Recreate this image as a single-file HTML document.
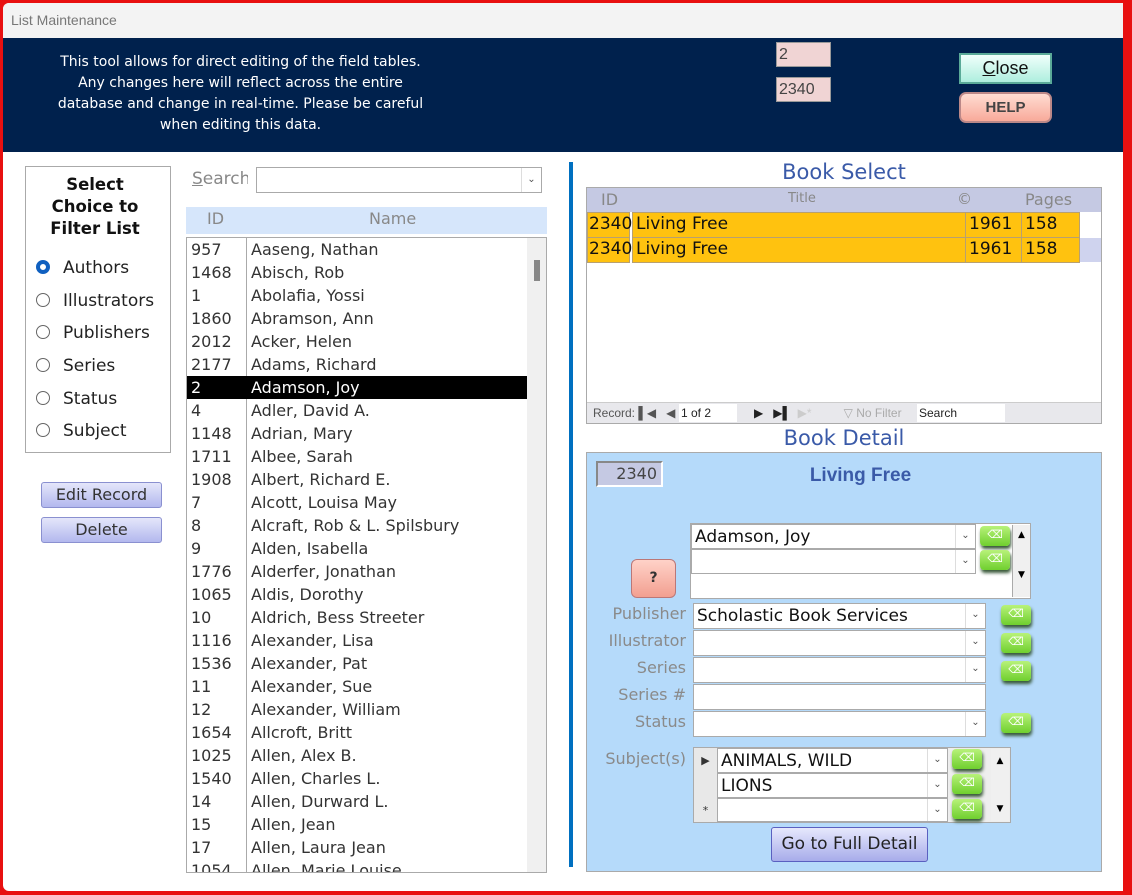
<!DOCTYPE html>
<html><head><meta charset="utf-8"><style>
*{margin:0;padding:0;box-sizing:border-box}
body{width:1132px;height:895px;background:#e81010;position:relative;overflow:hidden;font-family:"DejaVu Sans","Liberation Sans",sans-serif}
.a{position:absolute}
#win{left:3px;top:3px;width:1120px;height:888px;background:#fff;border-radius:6px 0 0 6px;overflow:hidden}
.t{font-size:15px;color:#888}
.row{position:absolute;left:0;height:23px;width:340px;font-size:16px;color:#333;line-height:23px}
.row span{position:absolute}
.rad{width:14px;height:14px;border:1px solid #666;border-radius:50%;background:#fff}
.rl{font-size:17px;color:#222}
.btn{background:linear-gradient(#e4e6fa,#b3b8ee);border:1px solid #8a90d0;border-radius:3px;text-align:center;color:#333;font-size:16px}
.lbl{font-size:16px;color:#8a8a8a;text-align:right;width:100px}
.fld{background:#fff;border:1px solid #aaa;font-size:17px;color:#111;padding-left:3px;line-height:24px}
.dd{position:absolute;right:0;top:0;width:20px;height:100%;border-left:1px solid #ddd;font-size:10px;color:#555;text-align:center;line-height:22px}
.gb{width:30px;height:20px;background:linear-gradient(#b8f27a,#6fcf2e);border-radius:4px;box-shadow:1px 3px 3px #3a5a3a;color:#fff;font-size:11px;text-align:center;line-height:18px}
.cell{position:absolute;background:#ffc20f;border:1px solid #b8a070;font-size:17px;color:#111;line-height:23px;padding-left:3px}
</style></head><body>
<div id="win" class="a">
<div class="a" style="left:0;top:0;width:1120px;height:35px;background:#f3f3f3"></div>
<div class="a t" style="left:8px;top:9px;font-family:'Liberation Sans';font-size:14px;color:#777">List Maintenance</div>
<div class="a" style="left:0;top:35px;width:1120px;height:114px;background:#00214d"></div>
<div class="a" style="left:10px;top:49px;width:455px;color:#fff;font-size:14px;line-height:21px;text-align:center;font-family:'DejaVu Sans'">This tool allows for direct editing of the field tables.<br>Any changes here will reflect across the entire<br>database and change in real-time. Please be careful<br>when editing this data.</div>
<div class="a" style="left:773px;top:39px;width:55px;height:25px;background:#f0d4d4;border:1px solid #999;font-size:16px;color:#444;padding-left:2px;line-height:24px;font-family:'Liberation Sans'">2</div>
<div class="a" style="left:773px;top:74px;width:55px;height:25px;background:#f0d4d4;border:1px solid #999;font-size:16px;color:#444;padding-left:2px;line-height:24px;font-family:'Liberation Sans'">2340</div>
<div class="a" style="left:956px;top:50px;width:93px;height:31px;background:linear-gradient(#f0fffb,#aeeede);border:2px solid #5aaa98;text-align:center;font-size:18px;line-height:27px;color:#111;font-family:'Liberation Sans'"><u>C</u>lose</div>
<div class="a" style="left:956px;top:89px;width:93px;height:31px;background:linear-gradient(#ffdcd2,#f8aa9a);border:2px solid #b88;border-radius:7px;text-align:center;font-size:15px;font-weight:bold;line-height:27px;color:#444;font-family:'Liberation Sans'">HELP</div>

<div class="a" style="left:22px;top:163px;width:146px;height:287px;border:1px solid #aaa"></div>
<div class="a" style="left:22px;top:171px;width:140px;text-align:center;font-weight:bold;font-size:16.5px;line-height:22px;color:#111">Select<br>Choice to<br>Filter List</div>
<div class="a rad" style="left:33px;top:257px;border:4px solid #1060c0"></div><div class="a rl" style="left:60px;top:255px">Authors</div>
<div class="a rad" style="left:33px;top:290px"></div><div class="a rl" style="left:60px;top:288px">Illustrators</div>
<div class="a rad" style="left:33px;top:322px"></div><div class="a rl" style="left:60px;top:320px">Publishers</div>
<div class="a rad" style="left:33px;top:355px"></div><div class="a rl" style="left:60px;top:353px">Series</div>
<div class="a rad" style="left:33px;top:388px"></div><div class="a rl" style="left:60px;top:386px">Status</div>
<div class="a rad" style="left:33px;top:420px"></div><div class="a rl" style="left:60px;top:418px">Subject</div>
<div class="a btn" style="left:38px;top:479px;width:121px;height:26px;line-height:24px">Edit Record</div>
<div class="a btn" style="left:38px;top:514px;width:121px;height:26px;line-height:24px">Delete</div>

<div class="a" style="left:189px;top:166px;font-size:17px;color:#888;width:56px;overflow:hidden;white-space:nowrap"><u>S</u>earch</div>
<div class="a" style="left:253px;top:164px;width:286px;height:26px;border:1px solid #aaa"><div class="dd" style="line-height:24px">&#8964;</div></div>
<div class="a" style="left:183px;top:204px;width:361px;height:27px;background:#d6e6fb"></div>
<div class="a" style="left:204px;top:206px;font-size:16px;color:#888">ID</div>
<div class="a" style="left:366px;top:206px;font-size:16px;color:#888">Name</div>
<div class="a" style="left:183px;top:234px;width:361px;height:636px;border:1px solid #aaa;overflow:hidden;background:#fff">
<div class="a" style="left:59px;top:0;width:1px;height:640px;background:#aaa"></div>
<div class="a" style="left:340px;top:0;width:20px;height:640px;background:#f0f0f0"></div>
<div class="a" style="left:347px;top:22px;width:6px;height:21px;background:#888"></div>
<div id="list"></div>
</div>

<div class="a" style="left:566px;top:159px;width:4px;height:705px;background:#0070c0"></div>

<div class="a" style="left:583px;top:157px;width:516px;text-align:center;font-size:21px;color:#3a5aa8">Book Select</div>
<div class="a" style="left:583px;top:184px;width:516px;height:237px;border:1px solid #aaa;background:#fff"></div>
<div class="a" style="left:584px;top:185px;width:514px;height:24px;background:#c5c9e3"></div>
<div class="a" style="left:598px;top:187px;font-size:16px;color:#888">ID</div>
<div class="a" style="left:785px;top:188px;font-size:13px;color:#888">Title</div>
<div class="a" style="left:954px;top:187px;font-size:15px;color:#888">©</div>
<div class="a" style="left:1022px;top:187px;font-size:16px;color:#888">Pages</div>
<div class="a" style="left:1077px;top:235px;width:21px;height:24px;background:#cfd3ee"></div>
<div class="cell" style="left:584px;top:209px;width:43px;height:26px;padding-left:1px">2340</div>
<div class="cell" style="left:629px;top:209px;width:334px;height:26px">Living Free</div>
<div class="cell" style="left:962px;top:209px;width:57px;height:26px">1961</div>
<div class="cell" style="left:1018px;top:209px;width:59px;height:26px">158</div>
<div class="cell" style="left:584px;top:234px;width:43px;height:26px;padding-left:1px">2340</div>
<div class="cell" style="left:629px;top:234px;width:334px;height:26px">Living Free</div>
<div class="cell" style="left:962px;top:234px;width:57px;height:26px">1961</div>
<div class="cell" style="left:1018px;top:234px;width:59px;height:26px">158</div>
<div class="a" style="left:584px;top:399px;width:514px;height:21px;background:#e8e8ec;border-top:1px solid #ccc;font-family:'Liberation Sans';font-size:12px;color:#555;line-height:20px">
<span class="a" style="left:6px">Record: &#9612;&#9664;&nbsp;&nbsp; &#9664;</span>
<span class="a" style="left:92px;top:1px;width:58px;height:18px;background:#fff;color:#222;line-height:18px;padding-left:2px">1 of 2</span>
<span class="a" style="left:167px;color:#222">&#9654;&nbsp;&nbsp; &#9654;&#9612;&nbsp; <span style="color:#ccc">&#9654;*</span></span>
<span class="a" style="left:240px;color:#aaa">&nbsp;&nbsp;&nbsp;&nbsp;&nbsp;▽ No Filter</span>
<span class="a" style="left:330px;top:1px;width:88px;height:18px;background:#fff;color:#222;line-height:18px;padding-left:2px">Search</span>
</div>

<div class="a" style="left:583px;top:423px;width:516px;text-align:center;font-size:21px;color:#3a5aa8">Book Detail</div>
<div class="a" style="left:583px;top:449px;width:516px;height:420px;background:#b5dafa;border:1px solid #aaa"></div>
<div class="a" style="left:593px;top:458px;width:67px;height:26px;background:#c5c9e3;border:2px solid #888;border-right-color:#fff;border-bottom-color:#fff;text-align:right;padding-right:4px;font-size:16px;color:#444;line-height:22px">2340</div>
<div class="a" style="left:700px;top:462px;width:315px;text-align:center;font-size:19px;font-weight:bold;color:#3a5aa8;font-family:'Liberation Sans'">Living Free</div>

<div class="a" style="left:687px;top:520px;width:341px;height:76px;border:1px solid #aaa;background:#fff"></div>
<div class="a fld" style="left:688px;top:521px;width:285px;height:25px">Adamson, Joy<div class="dd">&#8964;</div></div>
<div class="a fld" style="left:688px;top:546px;width:285px;height:25px"><div class="dd">&#8964;</div></div>
<div class="a gb" style="left:977px;top:523px">&#9003;</div>
<div class="a gb" style="left:977px;top:547px">&#9003;</div>
<div class="a" style="left:1009px;top:522px;width:18px;height:72px;background:#f0f0f0;border-left:1px solid #aaa;font-size:9px;text-align:center;line-height:20px">▲<br><br>▼</div>
<div class="a" style="left:628px;top:556px;width:45px;height:39px;background:linear-gradient(#ffd2c8,#f29f90);border:1px solid #b77;border-radius:6px;text-align:center;font-weight:bold;font-size:14px;line-height:37px;color:#333">?</div>

<div class="a lbl" style="left:583px;top:601px">Publisher</div>
<div class="a fld" style="left:690px;top:600px;width:293px;height:26px">Scholastic Book Services<div class="dd">&#8964;</div></div>
<div class="a gb" style="left:998px;top:602px">&#9003;</div>
<div class="a lbl" style="left:583px;top:628px">Illustrator</div>
<div class="a fld" style="left:690px;top:627px;width:293px;height:26px"><div class="dd">&#8964;</div></div>
<div class="a gb" style="left:998px;top:630px">&#9003;</div>
<div class="a lbl" style="left:583px;top:655px">Series</div>
<div class="a fld" style="left:690px;top:654px;width:293px;height:26px"><div class="dd">&#8964;</div></div>
<div class="a gb" style="left:998px;top:658px">&#9003;</div>
<div class="a lbl" style="left:583px;top:682px">Series #</div>
<div class="a fld" style="left:690px;top:681px;width:293px;height:26px"></div>
<div class="a lbl" style="left:583px;top:709px">Status</div>
<div class="a fld" style="left:690px;top:708px;width:293px;height:26px"><div class="dd">&#8964;</div></div>
<div class="a gb" style="left:998px;top:710px">&#9003;</div>

<div class="a lbl" style="left:583px;top:746px">Subject(s)</div>
<div class="a" style="left:690px;top:744px;width:318px;height:76px;border:1px solid #aaa;background:#eee"></div>
<div class="a" style="left:691px;top:745px;width:23px;height:74px;background:#e8e8e8;font-size:11px;color:#333;text-align:center;line-height:25px">▶<br><br>*</div>
<div class="a fld" style="left:714px;top:745px;width:231px;height:25px">ANIMALS, WILD<div class="dd">&#8964;</div></div>
<div class="a fld" style="left:714px;top:770px;width:231px;height:25px">LIONS<div class="dd">&#8964;</div></div>
<div class="a fld" style="left:714px;top:795px;width:231px;height:24px"><div class="dd">&#8964;</div></div>
<div class="a gb" style="left:949px;top:746px">&#9003;</div>
<div class="a gb" style="left:949px;top:771px">&#9003;</div>
<div class="a gb" style="left:949px;top:796px">&#9003;</div>
<div class="a" style="left:988px;top:746px;width:18px;height:72px;background:#f0f0f0;font-size:9px;text-align:center;line-height:24px">▲<br><br>▼</div>
<div class="a btn" style="left:768px;top:824px;width:157px;height:35px;line-height:33px;font-size:17px;color:#222;background:linear-gradient(#e6e8fc,#a7acea);border-color:#5a60c0">Go to Full Detail</div>
</div>
<script>
var d=[["957","Aaseng, Nathan"],["1468","Abisch, Rob"],["1","Abolafia, Yossi"],["1860","Abramson, Ann"],["2012","Acker, Helen"],["2177","Adams, Richard"],["2","Adamson, Joy"],["4","Adler, David A."],["1148","Adrian, Mary"],["1711","Albee, Sarah"],["1908","Albert, Richard E."],["7","Alcott, Louisa May"],["8","Alcraft, Rob &amp; L. Spilsbury"],["9","Alden, Isabella"],["1776","Alderfer, Jonathan"],["1065","Aldis, Dorothy"],["10","Aldrich, Bess Streeter"],["1116","Alexander, Lisa"],["1536","Alexander, Pat"],["11","Alexander, Sue"],["12","Alexander, William"],["1654","Allcroft, Britt"],["1025","Allen, Alex B."],["1540","Allen, Charles L."],["14","Allen, Durward L."],["15","Allen, Jean"],["17","Allen, Laura Jean"],["1054","Allen, Marie Louise"]];
var h="";d.forEach(function(r,i){var s=i==6?"background:#000;color:#fff;":"";h+='<div class="row" style="top:'+(i*23)+'px;'+s+'"><span style="left:4px">'+r[0]+'</span><span style="left:64px">'+r[1]+'</span></div>';});
document.getElementById("list").innerHTML=h;
</script>
</body></html>
